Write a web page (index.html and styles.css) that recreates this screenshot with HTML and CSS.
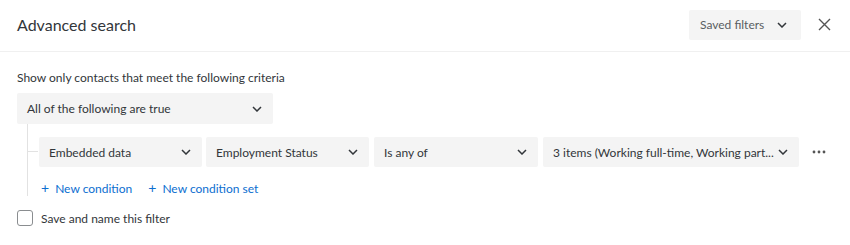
FILE: index.html
```html
<!DOCTYPE html>
<html>
<head>
<meta charset="utf-8">
<link rel="stylesheet" href="styles.css">
</head>
<body>
<div class="modal">
  <header class="header">
    <h1 class="title">Advanced search</h1>
    <div class="header-actions">
      <button class="saved-btn"><span>Saved filters</span>
        <svg class="chev" width="10" height="6" viewBox="0 0 10 6"><path d="M1 1l4 4 4-4" fill="none" stroke="#32363a" stroke-width="1.5"/></svg>
      </button>
      <button class="close-btn" aria-label="Close">
        <svg width="13" height="13" viewBox="0 0 13 13"><path d="M1 1l11 11M12 1L1 12" stroke="#555" stroke-width="1.4" fill="none"/></svg>
      </button>
    </div>
  </header>
  <main class="content">
    <p class="intro">Show only contacts that meet the following criteria</p>
    <div class="select select-all"><span>All of the following are true</span>
      <svg class="chev" width="10" height="6" viewBox="0 0 10 6"><path d="M1 1l4 4 4-4" fill="none" stroke="#32363a" stroke-width="1.5"/></svg>
    </div>
    <div class="tree">
      <div class="cond-row">
        <div class="select s1"><span>Embedded data</span><svg class="chev" width="10" height="6" viewBox="0 0 10 6"><path d="M1 1l4 4 4-4" fill="none" stroke="#32363a" stroke-width="1.5"/></svg></div>
        <div class="select s2"><span>Employment Status</span><svg class="chev" width="10" height="6" viewBox="0 0 10 6"><path d="M1 1l4 4 4-4" fill="none" stroke="#32363a" stroke-width="1.5"/></svg></div>
        <div class="select s3"><span>Is any of</span><svg class="chev" width="10" height="6" viewBox="0 0 10 6"><path d="M1 1l4 4 4-4" fill="none" stroke="#32363a" stroke-width="1.5"/></svg></div>
        <div class="select s4"><span class="trunc">3 items (Working full-time, Working part...</span><svg class="chev" width="10" height="6" viewBox="0 0 10 6"><path d="M1 1l4 4 4-4" fill="none" stroke="#32363a" stroke-width="1.5"/></svg></div>
        <button class="more" aria-label="More"><svg width="14" height="4" viewBox="0 0 14 4"><circle cx="2" cy="2" r="1.4" fill="#555"/><circle cx="7" cy="2" r="1.4" fill="#555"/><circle cx="12" cy="2" r="1.4" fill="#555"/></svg></button>
      </div>
      <div class="links">
        <a class="link" href="#"><span class="plus">+</span>New condition</a>
        <a class="link" href="#"><span class="plus">+</span>New condition set</a>
      </div>
    </div>
    <label class="check-row"><span class="checkbox"></span><span>Save and name this filter</span></label>
  </main>
</div>
</body>
</html>
```
FILE: styles.css
```css
* { box-sizing: border-box; }
html, body { margin: 0; padding: 0; background: #fff; }
body { font-family: "Lato", "Open Sans", sans-serif; color: #32363a; font-size: 12px; width: 850px; height: 245px; overflow: hidden; }
button { font-family: inherit; border: 0; background: none; padding: 0; margin: 0; color: inherit; cursor: pointer; }

.header { height: 52px; border-bottom: 1px solid #f0f0f0; display: flex; align-items: center; justify-content: space-between; padding: 0 19px 2px 17px; }
.title { margin: 0; font-size: 16px; font-weight: 400; color: #32363a; }
.header-actions { display: flex; align-items: center; gap: 16px; }
.saved-btn { width: 112px; height: 30px; background: #f4f4f4; display: flex; align-items: center; justify-content: space-between; padding: 0 14px 0 11px; font-size: 12px; color: #5a5e62; border-radius: 2px; }
.close-btn { width: 14px; height: 14px; display: flex; align-items: center; justify-content: center; }

.content { padding: 18px 17px 0 17px; }
.intro { margin: 0; line-height: 16px; font-size: 12px; }

.select { height: 31px; background: #f4f4f4; display: flex; align-items: center; justify-content: space-between; padding: 0 11px 0 10px; border-radius: 2px; }
.select-all { width: 256px; margin-top: 7px; }
.chev { flex: none; }

.tree { margin-left: 10px; border-left: 1px solid #e2e2e2; padding: 13px 0 0 11px; height: 72px; }
.cond-row { display: flex; align-items: center; gap: 4px; position: relative; }
.cond-row::before { content: ""; position: absolute; left: -11px; top: 14px; width: 10px; border-top: 1px solid #e2e2e2; }
.cond-row .select { height: 30px; }
.s1 { width: 163px; }
.s2 { width: 163px; }
.s3 { width: 164px; margin-left: 1px; }
.s4 { width: 256px; margin-left: 1px; padding-right: 11px; }
.trunc { white-space: nowrap; overflow: hidden; }
.more { margin-left: 8px; width: 16px; height: 16px; display: flex; align-items: center; justify-content: center; }

.links { display: flex; gap: 16px; margin-top: 12px; padding-left: 2px; }
.link { color: #0b6ed0; text-decoration: none; font-size: 12px; }
.plus { margin-right: 6px; font-size: 14px; }

.check-row { display: flex; align-items: center; gap: 8px; margin-top: 14px; font-size: 12px; }
.checkbox { width: 16px; height: 16px; border: 1px solid #8a8d90; border-radius: 3px; background: #fff; }
```
